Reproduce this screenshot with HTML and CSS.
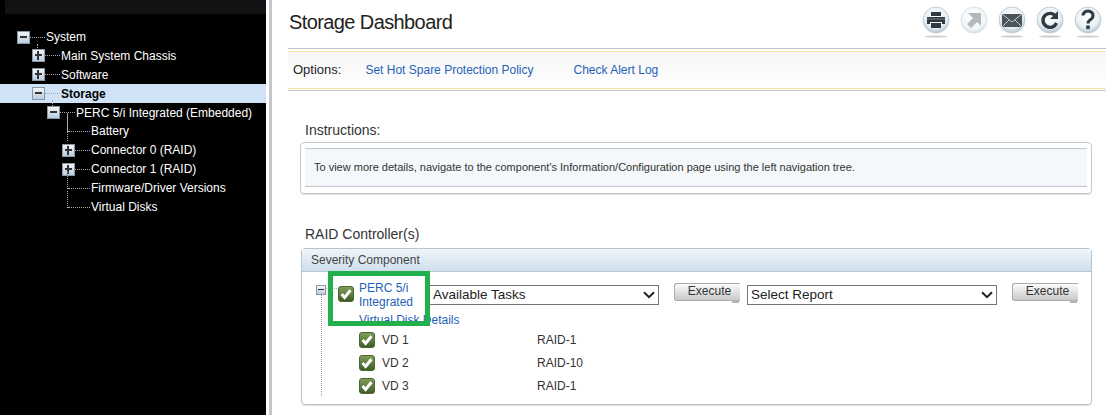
FILE: index.html
```html
<!DOCTYPE html>
<html lang="en">
<head>
    <meta charset="UTF-8">
    <meta name="viewport" content="width=device-width, initial-scale=1.0">
    <title>Storage Dashboard</title>
    <link rel="stylesheet" href="styles.css">
</head>
<body>
    <svg class="defs" width="0" height="0">
        <defs>
            <radialGradient id="ball" cx="48%" cy="38%" r="66%">
                <stop offset="0" stop-color="#ffffff"/>
                <stop offset="0.65" stop-color="#e9eff3"/>
                <stop offset="1" stop-color="#a6bbc9"/>
            </radialGradient>
            <radialGradient id="ballpale" cx="48%" cy="38%" r="66%">
                <stop offset="0" stop-color="#ffffff"/>
                <stop offset="0.7" stop-color="#f1f5f7"/>
                <stop offset="1" stop-color="#cfdbe2"/>
            </radialGradient>
            <linearGradient id="okfill" x1="0" y1="0" x2="0" y2="1">
                <stop offset="0" stop-color="#82a05a"/>
                <stop offset="1" stop-color="#3f5a26"/>
            </linearGradient>
            <symbol id="ok" viewBox="0 0 16 16">
                <rect x="0.5" y="0.5" width="15" height="15" rx="2.5" fill="url(#okfill)" stroke="#4c6630"/>
                <path d="M3.6 8l3 3.4L12.4 4.2" fill="none" stroke="#fff" stroke-width="3"/>
            </symbol>
        </defs>
    </svg>

    <aside class="sidebar">
        <div class="sidebar-top"></div>
        <ul class="tree">
            <li class="node stem"><span class="toggle minus"></span><span class="dots"></span>System</li>
            <li class="node lvl1"><span class="toggle plus"></span><span class="dots"></span>Main System Chassis</li>
            <li class="node lvl1"><span class="toggle plus"></span><span class="dots"></span>Software</li>
            <li class="node lvl1 selected stem"><span class="toggle minus"></span><span class="dots"></span>Storage</li>
            <li class="node lvl2 stem-long"><span class="toggle minus"></span><span class="dots"></span>PERC 5/i Integrated (Embedded)</li>
            <li class="node leaf"><span class="dots"></span>Battery</li>
            <li class="node lvl3"><span class="toggle plus"></span><span class="dots"></span>Connector 0 (RAID)</li>
            <li class="node lvl3"><span class="toggle plus"></span><span class="dots"></span>Connector 1 (RAID)</li>
            <li class="node leaf"><span class="dots"></span>Firmware/Driver Versions</li>
            <li class="node leaf"><span class="dots"></span>Virtual Disks</li>
        </ul>
    </aside>

    <main class="content">
        <header class="title-bar">
            <h1>Storage Dashboard</h1>
            <div class="tools">
                <svg class="tool" viewBox="0 0 30 34">
                    <ellipse cx="15" cy="31.5" rx="11" ry="1" fill="#ccc"/>
                    <circle cx="15" cy="15" r="13" fill="url(#ball)" stroke="#c4d0d8"/>
                    <path d="M10 7h10v4h-10zM6 12h18v7h-3v-2h-12v2h-3zM10 18h10v5h-10z" fill="#2f3a42"/>
                    <path d="M6 14h18" stroke="#6d7a83"/>
                </svg>
                <svg class="tool" viewBox="0 0 30 34">
                    <circle cx="15" cy="15" r="13" fill="url(#ballpale)" stroke="#d8e0e5"/>
                    <path d="M9 8h13v13l-4-4-6 6-4-4 6-6z" fill="#b4b8ba"/>
                </svg>
                <svg class="tool" viewBox="0 0 30 34">
                    <ellipse cx="15" cy="31.5" rx="11" ry="1" fill="#ccc"/>
                    <circle cx="15" cy="15" r="13" fill="url(#ball)" stroke="#c4d0d8"/>
                    <rect x="5" y="9" width="20" height="13" fill="#4a545b"/>
                    <path d="M5 9l10 8 10-8M5 22l7-7M25 22l-7-7" fill="none" stroke="#c6ced3"/>
                </svg>
                <svg class="tool" viewBox="0 0 30 34">
                    <ellipse cx="15" cy="31.5" rx="11" ry="1" fill="#ccc"/>
                    <circle cx="15" cy="15" r="13" fill="url(#ball)" stroke="#c4d0d8"/>
                    <path d="M20.5 11a7 7 0 1 0 1 7" fill="none" stroke="#2f3a42" stroke-width="3.4"/>
                    <path d="M23 6v8h-8z" fill="#2f3a42"/>
                </svg>
                <svg class="tool" viewBox="0 0 30 34">
                    <ellipse cx="15" cy="31.5" rx="11" ry="1" fill="#ccc"/>
                    <circle cx="15" cy="15" r="13" fill="url(#ball)" stroke="#c4d0d8"/>
                    <path d="M10 10.5a5 4.6 0 1 1 7.6 4c-1.8 1.2-2.6 2-2.6 4" fill="none" stroke="#2f3a42" stroke-width="3"/>
                    <rect x="13.2" y="20.5" width="3.6" height="3.6" fill="#2f3a42"/>
                </svg>
            </div>
        </header>

        <nav class="options">
            <span class="options-label">Options:</span>
            <a href="#">Set Hot Spare Protection Policy</a>
            <a href="#">Check Alert Log</a>
        </nav>

        <h2 class="section-title first">Instructions:</h2>
        <div class="note">
            <p>To view more details, navigate to the component's Information/Configuration page using the left navigation tree.</p>
        </div>

        <h2 class="section-title second">RAID Controller(s)</h2>
        <section class="panel">
            <div class="panel-head">Severity Component</div>
            <div class="panel-body">
                <div class="ctrl-row">
                    <span class="toggle small minus"></span>
                    <span class="ctrl-dots"></span>
                    <svg class="ok"><use href="#ok"/></svg>
                    <a class="ctrl-name" href="#">PERC 5/i Integrated</a>
                    <select class="pick tasks"><option>Available Tasks</option></select>
                    <button class="run">Execute</button>
                    <select class="pick report"><option>Select Report</option></select>
                    <button class="run last">Execute</button>
                </div>
                <a class="details" href="#">Virtual Disk Details</a>
                <div class="vd"><svg class="ok"><use href="#ok"/></svg><span class="vd-name">VD 1</span><span>RAID-1</span></div>
                <div class="vd"><svg class="ok"><use href="#ok"/></svg><span class="vd-name">VD 2</span><span>RAID-10</span></div>
                <div class="vd"><svg class="ok"><use href="#ok"/></svg><span class="vd-name">VD 3</span><span>RAID-1</span></div>
            </div>
            <div class="highlight"></div>
        </section>
    </main>
</body>
</html>
```

FILE: styles.css
```css
html, body {
    margin: 0;
    height: 415px;
    overflow: hidden;
}

body {
    display: flex;
    font-family: "Liberation Sans", Arial, sans-serif;
    font-size: 12px;
    color: #333;
    background-color: #fff;
}

.defs {
    position: absolute;
}

a {
    color: #1f62b8;
    text-decoration: none;
}

/* left tree */
.sidebar {
    flex: 0 0 266px;
    height: 415px;
    background-color: #000;
}

.sidebar-top {
    height: 14px;
    margin-left: 5px;
    background-color: #111214;
}

.tree {
    list-style: none;
    margin: 13.6px 0 0;
    padding: 0;
    color: #fff;
}

.node {
    position: relative;
    display: flex;
    align-items: center;
    height: 18.9px;
    padding-left: 17px;
    white-space: nowrap;
}

.lvl1 { padding-left: 32px; }
.lvl2 { padding-left: 47px; }
.lvl3 { padding-left: 62px; }
.leaf { padding-left: 68px; }

.selected {
    background-color: #d0e3f6;
    color: #000;
    font-weight: bold;
}

.dots {
    flex: 0 0 15px;
    height: 0;
    margin: 0 1px 0 0;
    border-top: 1px dotted #aaa;
}

.leaf .dots {
    flex-basis: 22px;
}

.stem::after,
.stem-long::after,
.leaf::before {
    content: "";
    position: absolute;
    border-left: 1px dotted #aaa;
}

.stem::after {
    left: 37px;
    top: 16px;
    height: 6px;
}

.lvl1.stem::after {
    left: 52px;
}

.stem-long::after {
    left: 67px;
    top: 10px;
    height: 28px;
}

.leaf::before {
    left: 67px;
    top: -7px;
    height: 17px;
}

.toggle {
    position: relative;
    flex: 0 0 13px;
    box-sizing: border-box;
    width: 13px;
    height: 13px;
    border: 1px solid #8a98a6;
    background: linear-gradient(#f2f6fa, #b9cde0);
}

.toggle::before {
    content: "";
    position: absolute;
    left: 2px;
    right: 2px;
    top: 4px;
    height: 2px;
    background-color: #333;
}

.plus::after {
    content: "";
    position: absolute;
    top: 1px;
    bottom: 1px;
    left: 4px;
    width: 2px;
    background-color: #333;
}

.toggle.small {
    flex-basis: 10px;
    width: 10px;
    height: 10px;
    margin-top: 2px;
}

.toggle.small::before {
    left: 1px;
    right: 1px;
    top: 3px;
    height: 1px;
}

/* main area */
.content {
    flex: 1;
    min-width: 0;
    margin-left: 3px;
    border-left: 3px solid #c3c7cb;
    box-sizing: border-box;
    padding-left: 16px;
}

.title-bar {
    display: flex;
    justify-content: space-between;
    height: 48px;
}

h1 {
    margin: 9px 0 0 1px;
    font-size: 20px;
    font-weight: normal;
    line-height: 26px;
    letter-spacing: -0.6px;
    color: #222;
}

.tools {
    display: flex;
    gap: 8px;
    margin: 5px 3px 0 0;
}

.tool {
    width: 30px;
    height: 34px;
}

.options {
    display: flex;
    align-items: center;
    box-sizing: border-box;
    height: 43px;
    padding-left: 5px;
    border-top: 1px solid #c4c4c4;
    border-bottom: 1px solid #c4c4c4;
    box-shadow: inset 0 2px 0 #fff, inset 0 3px 0 #fbdf9e, inset 0 -1px 0 #fff, inset 0 -2px 0 #fbdf9e;
    background: linear-gradient(#f5f5f5, #fff);
}

.options a {
    margin-left: 40px;
}

.options a:first-of-type {
    margin-left: 24px;
}

.options-label {
    font-size: 13px;
    color: #222;
}

.section-title {
    margin: 0 0 0 17px;
    font-size: 14px;
    font-weight: normal;
    line-height: 18px;
    color: #333;
}

.section-title.first {
    margin-top: 30px;
}

.section-title.second {
    margin-top: 31px;
}

.note {
    box-sizing: border-box;
    width: 792px;
    height: 52px;
    margin: 3px 0 0 12px;
    padding: 5px 4px 6px;
    border: 1px solid #c4c8cc;
    border-radius: 4px;
    box-shadow: 0 1px 1px #ddd;
}

.note p {
    box-sizing: border-box;
    height: 39px;
    margin: 0;
    padding: 0 9px;
    border-top: 1px solid #bfc5cc;
    border-bottom: 1px solid #bfc5cc;
    background-color: #f4f8fb;
    font-size: 11px;
    line-height: 37px;
}

.panel {
    position: relative;
    box-sizing: border-box;
    width: 791px;
    height: 157px;
    margin: 5px 0 0 13px;
    border: 1px solid #bcc4ca;
    border-radius: 4px;
    box-shadow: 0 1px 1px #ddd;
}

.panel-head {
    box-sizing: border-box;
    height: 23px;
    padding-left: 9px;
    border-bottom: 1px solid #b5c6d6;
    background: linear-gradient(#eef6fc, #cfdfec);
    line-height: 23px;
    color: #444;
}

.panel-body {
    position: relative;
    padding-left: 14px;
}

.panel-body::before {
    content: "";
    position: absolute;
    left: 19px;
    top: 22px;
    height: 102px;
    border-left: 1px dotted #999;
}

.ctrl-row {
    display: flex;
    align-items: flex-start;
    padding-top: 11px;
}

.ctrl-dots {
    flex: 0 0 11px;
    height: 0;
    margin: 5px 1px 0 0;
    border-top: 1px dotted #aaa;
}

.ok {
    flex: 0 0 16px;
    width: 16px;
    height: 16px;
}

.ctrl-row .ok {
    margin-top: 3px;
}

.ctrl-name {
    flex: 0 0 70px;
    margin: -2px 0 0 5px;
    line-height: 14px;
}

.pick {
    appearance: none;
    box-sizing: border-box;
    height: 20px;
    margin-top: 2px;
    padding: 0 0 1px 3px;
    border: 1px solid #767676;
    border-radius: 0;
    background: #fff url("data:image/svg+xml,%3Csvg xmlns='http://www.w3.org/2000/svg' width='12' height='8'%3E%3Cpath d='M1 1.2l5 5 5-5' fill='none' stroke='%23222' stroke-width='2'/%3E%3C/svg%3E") no-repeat right 3px center;
    font-family: "Liberation Sans", Arial, sans-serif;
    font-size: 13.5px;
    color: #222;
}

.tasks {
    width: 230px;
}

.report {
    width: 250px;
}

.run {
    position: relative;
    box-sizing: border-box;
    flex: 0 0 66px;
    height: 18px;
    margin: 0 7px 0 15px;
    padding: 0 0 2px 4px;
    border: 1px solid #aaa;
    border-right: 0;
    border-radius: 3px 0 0 3px;
    background: linear-gradient(#fbfbfb, #c9c9c9);
    font-family: "Liberation Sans", Arial, sans-serif;
    font-size: 12px;
    color: #333;
}

.run::after {
    content: "";
    position: absolute;
    right: 1px;
    bottom: -3px;
    width: 7px;
    height: 3px;
    background-color: #b4b4b4;
}

.run.last {
    margin-right: 0;
}

.details {
    display: block;
    margin: 3px 0 0 43px;
    line-height: 16px;
}

.vd {
    display: flex;
    align-items: center;
    height: 23px;
    padding-left: 43px;
}

.vd-name {
    flex: 0 0 155px;
    margin-left: 7px;
}

/* green marker drawn over the screenshot */
.highlight {
    position: absolute;
    left: 26px;
    top: 22px;
    box-sizing: border-box;
    width: 102px;
    height: 55px;
    border: 5px solid #21b04b;
}
```
